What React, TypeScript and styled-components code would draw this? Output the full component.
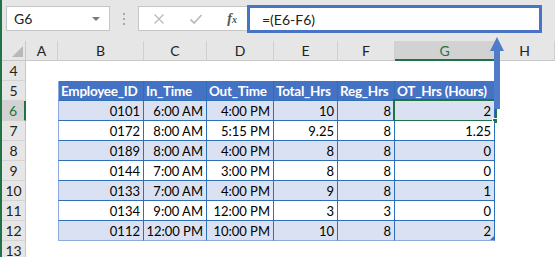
import * as React from 'react'
import styled, { createGlobalStyle, css } from 'styled-components'

const GlobalStyle = createGlobalStyle`
  html, body {
    margin: 0;
    padding: 0;
    background: #fff;
    overflow: hidden;
  }
  * {
    box-sizing: border-box;
  }
`

const FONT = `Lato, "Open Sans", sans-serif`
const GREEN = '#217346'
const BLUE = '#4472C4'
const LINE = '#2F6FB8'
const SOFT_LINE = '#8EA9DB'

type Row = [string, string, string, string, string, string]

const rows: Row[] = [
  ['0101', '6:00 AM', '4:00 PM', '10', '8', '2'],
  ['0172', '8:00 AM', '5:15 PM', '9.25', '8', '1.25'],
  ['0189', '8:00 AM', '4:00 PM', '8', '8', '0'],
  ['0144', '7:00 AM', '3:00 PM', '8', '8', '0'],
  ['0133', '7:00 AM', '4:00 PM', '9', '8', '1'],
  ['0134', '9:00 AM', '12:00 PM', '3', '3', '0'],
  ['0112', '12:00 PM', '10:00 PM', '10', '8', '2'],
]

const headers = ['Employee_ID', 'In_Time', 'Out_Time', 'Total_Hrs', 'Reg_Hrs', 'OT_Hrs (Hours)']
const columns = ['A', 'B', 'C', 'D', 'E', 'F', 'G', 'H']

export default function App() {
  return <Frame>
    <GlobalStyle />
    <Toolbar>
      <NameBox>
        G6
        <DropArrow />
      </NameBox>
      <Grip><i /><i /><i /></Grip>
      <FormulaButtons>
        <svg width="12" height="12" viewBox="0 0 12 12">
          <path d="M1.5 1.5 L10.5 10.5 M10.5 1.5 L1.5 10.5" stroke="#bcbcbc" strokeWidth="1.4" fill="none" />
        </svg>
        <svg width="14" height="12" viewBox="0 0 14 12">
          <path d="M1.5 6.5 L5.2 10 L12.5 2" stroke="#bcbcbc" strokeWidth="1.8" fill="none" />
        </svg>
        <Fx>f<sub>x</sub></Fx>
      </FormulaButtons>
      <FormulaInput>=(E6-F6)</FormulaInput>
    </Toolbar>

    <Sheet>
      <Corner />
      {columns.map(c => <ColHead key={c} active={c === 'G'}>{c}</ColHead>)}

      <RowHead>4</RowHead>
      {columns.map(c => <Blank key={c} />)}

      <RowHead>5</RowHead>
      <Blank />
      {headers.map((h, i) => <HeadCell key={h} first={i === 0}>{h}</HeadCell>)}
      <Blank />

      {rows.map((r, ri) => {
        const n = ri + 6
        const last = ri === rows.length - 1
        return <React.Fragment key={n}>
          <RowHead active={n === 6}>{n}</RowHead>
          <Blank />
          {r.map((v, ci) => <DataCell key={ci} band={ri % 2 === 0} first={ci === 0} last={last}>
            {v}
            {n === 6 && ci === 5 && <Selection><FillHandle /></Selection>}
            {last && ci === 5 && <ResizeMark />}
          </DataCell>)}
          <Blank />
        </React.Fragment>
      })}

      <RowHead>13</RowHead>
      {columns.map(c => <Blank key={c} />)}
    </Sheet>

    <Arrow width="16" height="72" viewBox="0 0 16 72">
      <path d="M8 0 L15 14 L11 14 L11 72 L5 72 L5 14 L1 14 Z" fill="#4F7BC9" />
    </Arrow>
  </Frame>
}

const Frame = styled.div`
  position: relative;
  width: 555px;
  height: 257px;
  overflow: hidden;
  border-left: 2px solid ${GREEN};
  font-family: ${FONT};
  color: #000;
`

const Toolbar = styled.div`
  display: flex;
  align-items: flex-start;
  height: 41px;
  padding: 6px 0 0 4px;
  background: #e6e6e6;
`

const NameBox = styled.div`
  position: relative;
  display: flex;
  align-items: center;
  width: 104px;
  height: 25px;
  padding-left: 7px;
  background: #fff;
  border: 1px solid #c6c6c6;
  font-size: 14px;
  color: #222;
`

const DropArrow = styled.span`
  position: absolute;
  right: 9px;
  top: 10px;
  border-left: 4px solid transparent;
  border-right: 4px solid transparent;
  border-top: 4px solid #7a7a7a;
`

const Grip = styled.div`
  display: flex;
  flex-direction: column;
  gap: 3px;
  width: 28px;
  padding-top: 7px;
  align-items: center;
  i {
    width: 2px;
    height: 2px;
    background: #a8a8a8;
  }
`

const FormulaButtons = styled.div`
  display: flex;
  align-items: center;
  justify-content: space-between;
  width: 109px;
  height: 25px;
  padding: 0 10px 0 14px;
  background: #fff;
  border: 1px solid #c6c6c6;
  border-right: none;
`

const Fx = styled.span`
  font-family: "Liberation Serif", serif;
  font-style: italic;
  font-weight: bold;
  font-size: 14px;
  color: #555;
  sub {
    font-size: 10px;
    vertical-align: 0;
  }
`

const FormulaInput = styled.div`
  display: flex;
  align-items: center;
  width: 295px;
  height: 28px;
  margin-top: -1px;
  padding-left: 12px;
  background: #fff;
  border: 3px solid #4874C6;
  font-size: 14px;
  color: #222;
`

const Sheet = styled.div`
  display: grid;
  grid-template-columns: 24px 32px 86px 63px 67px 64px 57px 100px 1fr;
  grid-auto-rows: 20px;
  font-size: 14px;
`

const Corner = styled.div`
  position: relative;
  background: #e6e6e6;
  border-right: 1px solid #c8c8c8;
  border-bottom: 1px solid #c8c8c8;
  &::after {
    content: '';
    position: absolute;
    right: 2px;
    bottom: 3px;
    border-left: 11px solid transparent;
    border-bottom: 11px solid #b9b9b9;
  }
`

const ColHead = styled.div<{ active?: boolean }>`
  display: flex;
  align-items: center;
  justify-content: center;
  background: ${p => p.active ? '#d2d2d2' : '#e6e6e6'};
  border-right: 1px solid #d0d0d0;
  border-bottom: ${p => p.active ? `2px solid ${GREEN}` : '1px solid #c8c8c8'};
  color: ${p => p.active ? GREEN : '#222'};
`

const RowHead = styled.div<{ active?: boolean }>`
  display: flex;
  align-items: center;
  justify-content: center;
  background: ${p => p.active ? '#d2d2d2' : '#e6e6e6'};
  border-bottom: 1px solid #d4d4d4;
  border-right: ${p => p.active ? `2px solid ${GREEN}` : '1px solid #c8c8c8'};
  color: ${p => p.active ? GREEN : '#222'};
`

const Blank = styled.div`
  background: #fff;
`

const HeadCell = styled.div<{ first?: boolean }>`
  display: flex;
  align-items: center;
  padding: 0 2px;
  white-space: nowrap;
  overflow: hidden;
  background: ${BLUE};
  color: #fff;
  font-weight: bold;
  font-size: 13.5px;
  letter-spacing: -0.25px;
  border-right: 1px solid ${LINE};
  border-bottom: 1px solid ${LINE};
  ${p => p.first && css`border-left: 1px solid ${SOFT_LINE};`}
`

const DataCell = styled.div<{ band: boolean; first: boolean; last: boolean }>`
  position: relative;
  display: flex;
  align-items: center;
  justify-content: flex-end;
  padding: 0 3px;
  white-space: nowrap;
  background: ${p => p.band ? '#D9E1F2' : '#fff'};
  font-size: 13px;
  border-right: 1px solid ${LINE};
  border-bottom: 1px solid ${p => p.last ? SOFT_LINE : LINE};
  ${p => p.first && css`border-left: 1px solid ${SOFT_LINE};`}
`

const Selection = styled.div`
  position: absolute;
  left: -2px;
  top: -2px;
  right: -3px;
  bottom: -2px;
  border: 2px solid ${GREEN};
  pointer-events: none;
`

const FillHandle = styled.div`
  position: absolute;
  right: -3px;
  bottom: -4px;
  width: 6px;
  height: 6px;
  background: ${GREEN};
  border: 1px solid #fff;
`

const ResizeMark = styled.div`
  position: absolute;
  right: 0;
  bottom: 0;
  border-left: 4px solid transparent;
  border-bottom: 4px solid #3b6fc0;
`

const Arrow = styled.svg`
  position: absolute;
  left: 487px;
  top: 37px;
`
